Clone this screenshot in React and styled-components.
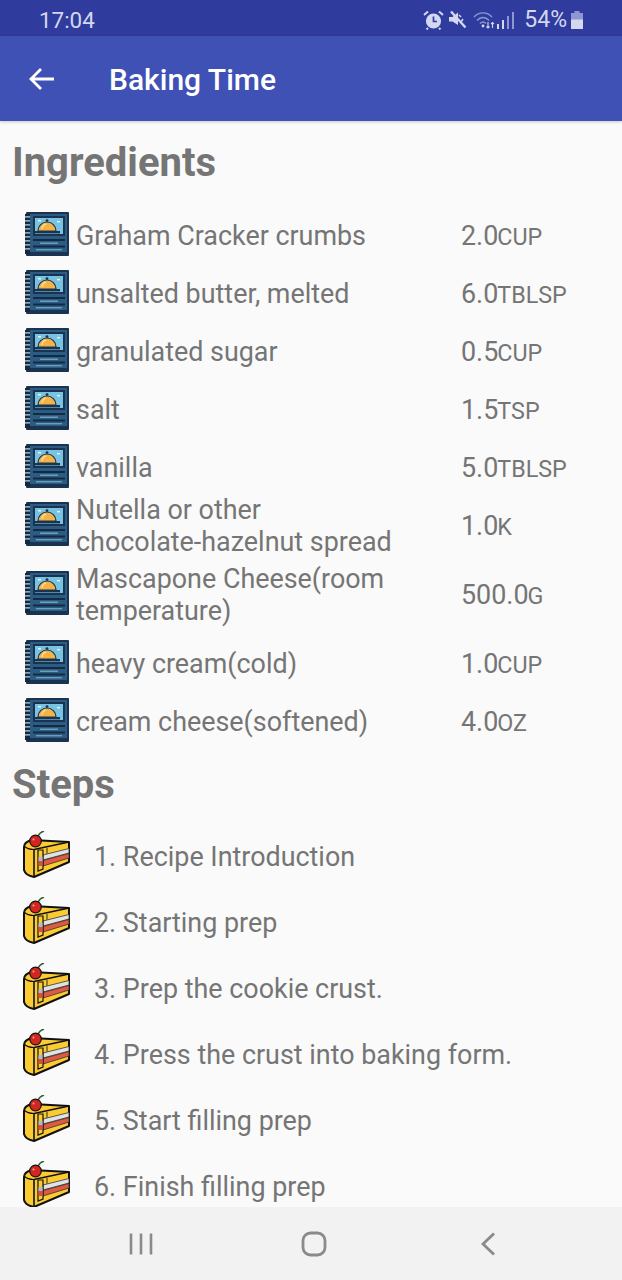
import React from "react";
import styled, { createGlobalStyle } from "styled-components";

const Global = createGlobalStyle`
  html, body { margin: 0; padding: 0; background: #fafafa; }
  * { box-sizing: border-box; }
  body { font-family: Roboto, "Noto Sans", sans-serif; }
`;

const ingredients = [
  { name: "Graham Cracker crumbs", qty: "2.0", unit: "CUP" },
  { name: "unsalted butter, melted", qty: "6.0", unit: "TBLSP" },
  { name: "granulated sugar", qty: "0.5", unit: "CUP" },
  { name: "salt", qty: "1.5", unit: "TSP" },
  { name: "vanilla", qty: "5.0", unit: "TBLSP" },
  { name: "Nutella or other chocolate-hazelnut spread", qty: "1.0", unit: "K" },
  { name: "Mascapone Cheese(room temperature)", qty: "500.0", unit: "G", tall: true },
  { name: "heavy cream(cold)", qty: "1.0", unit: "CUP" },
  { name: "cream cheese(softened)", qty: "4.0", unit: "OZ" },
];

const steps = [
  "1. Recipe Introduction",
  "2. Starting prep",
  "3. Prep the cookie crust.",
  "4. Press the crust into baking form.",
  "5. Start filling prep",
  "6. Finish filling prep",
];

function BookIcon() {
  return (
    <BookSvg width="46" height="46" viewBox="0 0 46 46">
      <rect x="2" y="1" width="43" height="44" rx="1" fill="#1a3350" />
      <rect x="6" y="3" width="37" height="38" fill="#2a5c84" />
      <rect x="1" y="3" width="5" height="40" fill="#16283e" />
      {[5, 9, 13, 17, 21, 25, 29, 33, 37].map(y => (
        <rect key={y} x="1" y={y} width="5" height="1.7" fill="#8fa5b8" />
      ))}
      <rect x="9" y="5" width="32" height="20" fill="#1a3350" />
      <rect x="11" y="7" width="28" height="16" fill="#79c3e2" />
      <path d="M14 20 a9 9 0 0 1 18 0 z" fill="#f4b445" stroke="#1a3350" strokeWidth="1.2" />
      <path d="M18 18 a6 6 0 0 1 4 -5" stroke="#fbe3a8" strokeWidth="1.2" fill="none" />
      <circle cx="23" cy="9.6" r="1.4" fill="#1a3350" />
      <rect x="11" y="20" width="25" height="2.4" fill="#1a3350" />
      <rect x="14" y="9" width="3" height="1.4" fill="#e3f4fb" />
      <rect x="33" y="10" width="3" height="1.4" fill="#e3f4fb" />
      <rect x="9" y="28" width="32" height="2" fill="#142a42" />
      <rect x="16" y="31.5" width="18" height="1.5" fill="#6f9dbc" />
      <rect x="9" y="34.5" width="32" height="2" fill="#142a42" />
      <rect x="12" y="38" width="26" height="1.4" fill="#6f9dbc" />
    </BookSvg>
  );
}

function CakeIcon() {
  return (
    <CakeSvg width="48" height="48" viewBox="0 0 48 48">
      <path
        d="M1 16 C1 12 5 10 9 9 L46 11 L46 31 L11 46 C6 45 2 43 1 39 Z"
        fill="#fbcb34"
        stroke="#111"
        strokeWidth="2"
        strokeLinejoin="round"
      />
      <path d="M11 18.5 L46 11" stroke="#111" strokeWidth="1.3" />
      <path d="M11 18.5 V46" stroke="#111" strokeWidth="1.6" />
      <path d="M1 15 C4 18 8 18.5 11 18.5" stroke="#111" strokeWidth="1.2" fill="none" />
      <path d="M20 24 L46 17.5 L46 22 L20 29 Z" fill="#dfe3e6" stroke="#333" strokeWidth="0.8" />
      <path d="M20 29.5 L46 22.5 L46 27 L20 35 Z" fill="#de5a43" stroke="#333" strokeWidth="0.8" />
      <path d="M15 19 H20 V38 L15 40 Z" fill="#fbcb34" stroke="#111" strokeWidth="1.2" />
      <rect x="15.5" y="26" width="4" height="4" fill="#b7b4cf" />
      <rect x="15.5" y="30" width="4" height="5" fill="#d9503c" />
      <path d="M24 17 V23" stroke="#7a6a20" strokeWidth="1.6" />
      <path d="M15 5 C16 3 18 1 21 0" stroke="#2f5f33" strokeWidth="1.6" fill="none" />
      <circle cx="12.5" cy="10" r="5.8" fill="#d3261f" stroke="#111" strokeWidth="1.2" />
      <circle cx="10.5" cy="8.5" r="1" fill="#f6a8a0" />
    </CakeSvg>
  );
}

export default function App() {
  return (
    <>
      <Global />
      <Screen>
        <StatusBar>
          <Clock>17:04</Clock>
          <StatusIcons>
            <svg width="21" height="20" viewBox="0 0 21 20">
              <circle cx="10.5" cy="11" r="7.6" fill="#d3d7f0" />
              <path d="M10.5 6.5 V11.5 H14" stroke="#2f3c9e" strokeWidth="1.7" fill="none" />
              <path d="M1 5 L5 1.5 M20 5 L16 1.5 M5 18 L3.5 19.5 M16 18 L17.5 19.5" stroke="#d3d7f0" strokeWidth="2" />
            </svg>
            <svg width="19" height="19" viewBox="0 0 19 19">
              <path d="M1 7 H4.5 L10 2.5 V15 L4.5 11.5 H1 Z" fill="#d3d7f0" />
              <path d="M11 5 L13 7 M13 12 L15 9" stroke="#d3d7f0" strokeWidth="1.5" />
              <path d="M3 1.5 L17.5 17.5" stroke="#d3d7f0" strokeWidth="2.4" />
            </svg>
            <WifiSignal>
              <svg width="22" height="20" viewBox="0 0 22 20">
                <path d="M1 7 C6 1.5 14 1.5 19 7 M4 10.5 C7.5 6.5 12.5 6.5 16 10.5 M7 13.5 C9 11.5 11 11.5 13 13.5" stroke="#8f97d2" strokeWidth="1.4" fill="none" />
                <circle cx="10" cy="16" r="1.4" fill="#d3d7f0" />
                <path d="M15 12 V18 M13.5 16.5 L15 18 L16.5 16.5 M19.5 18 V12.5 M18 14 L19.5 12.5 L21 14" stroke="#d3d7f0" strokeWidth="1.1" fill="none" />
              </svg>
              <svg width="20" height="20" viewBox="0 0 20 20">
                <rect x="1" y="14" width="2" height="5" fill="#d3d7f0" />
                <rect x="6" y="10" width="2" height="9" fill="#d3d7f0" />
                <rect x="11" y="6" width="2" height="13" fill="#8f97d2" />
                <rect x="16" y="2" width="2" height="17" fill="#8f97d2" />
              </svg>
            </WifiSignal>
            <Battery>54%</Battery>
            <svg width="12" height="18" viewBox="0 0 12 18">
              <rect x="3.5" y="0" width="5" height="2" fill="#8f97d2" />
              <rect x="0" y="2" width="12" height="16" fill="#8f97d2" />
              <rect x="0" y="8.5" width="12" height="9.5" fill="#d3d7f0" />
            </svg>
          </StatusIcons>
        </StatusBar>

        <Toolbar>
          <svg width="26" height="24" viewBox="0 0 26 24">
            <path d="M25 12 H2.5 M12 2 L2 12 L12 22" stroke="#fff" strokeWidth="2.8" fill="none" />
          </svg>
          <Title>Baking Time</Title>
        </Toolbar>

        <Content>
          <Heading>Ingredients</Heading>
          <IngredientList>
            {ingredients.map(item => (
              <IngredientRow key={item.name} $tall={item.tall}>
                <BookIcon />
                <IngredientName>{item.name}</IngredientName>
                <Quantity>
                  {item.qty}
                  <Unit>{item.unit}</Unit>
                </Quantity>
              </IngredientRow>
            ))}
          </IngredientList>

          <StepsHeading>Steps</StepsHeading>
          <StepList>
            {steps.map(step => (
              <StepRow key={step}>
                <CakeIcon />
                <StepText>{step}</StepText>
              </StepRow>
            ))}
          </StepList>
        </Content>

        <NavBar>
          <svg width="26" height="24" viewBox="0 0 26 24">
            <path d="M3 1.5 V22.5 M13 1.5 V22.5 M23 1.5 V22.5" stroke="#8a8a8a" strokeWidth="2.6" />
          </svg>
          <svg width="26" height="26" viewBox="0 0 26 26">
            <rect x="2" y="2" width="22" height="22" rx="7.5" stroke="#8a8a8a" strokeWidth="2.8" fill="none" />
          </svg>
          <svg width="16" height="24" viewBox="0 0 16 24">
            <path d="M14 1.5 L3 12 L14 22.5" stroke="#8a8a8a" strokeWidth="2.8" fill="none" />
          </svg>
        </NavBar>
      </Screen>
    </>
  );
}

const Screen = styled.div`
  width: 622px;
  height: 1280px;
  display: flex;
  flex-direction: column;
  overflow: hidden;
  background: #fafafa;
`;

const StatusBar = styled.div`
  height: 36px;
  flex: none;
  background: #2f3c9e;
  color: #d3d7f0;
  display: flex;
  align-items: center;
  justify-content: space-between;
  padding: 3px 39px 0 39px;
`;

const Clock = styled.span`
  font-size: 22.4px;
`;

const StatusIcons = styled.div`
  display: flex;
  align-items: center;
  gap: 4px;
`;

const WifiSignal = styled.div`
  display: flex;
  align-items: center;
  margin-left: 2px;
  gap: 1px;
`;

const Battery = styled.span`
  font-size: 23px;
  margin-left: 4px;
`;

const Toolbar = styled.header`
  height: 85px;
  flex: none;
  background: #3f51b5;
  display: flex;
  align-items: center;
  padding: 0 0 0 29px;
  box-shadow: 0 1px 3px rgba(0, 0, 0, 0.2);
  position: relative;
`;

const Title = styled.h1`
  margin: 0 0 0 54px;
  padding-top: 1px;
  color: #fff;
  font-size: 30px;
  font-weight: 500;
`;

const Content = styled.main`
  flex: 1;
  min-height: 0;
  overflow: hidden;
`;

const Heading = styled.h2`
  margin: 0;
  padding: 20px 0 0 12px;
  height: 86px;
  font-size: 40px;
  line-height: 44px;
  font-weight: 700;
  color: #757575;
`;

const StepsHeading = styled(Heading)`
  height: 73px;
  padding-top: 12px;
`;

const IngredientList = styled.div`
  display: flex;
  flex-direction: column;
  padding: 0 0 0 24px;
`;

const IngredientRow = styled.div`
  height: ${p => (p.$tall ? "80px" : "58px")};
  display: flex;
  align-items: center;
  gap: 6px;
  color: #757575;
`;

const BookSvg = styled.svg`
  flex: none;
  margin-bottom: 4px;
`;

const CakeSvg = styled.svg`
  flex: none;
  margin-bottom: 4px;
`;

const IngredientName = styled.div`
  width: 384px;
  flex: none;
  margin-right: -5px;
  padding-right: 68px;
  font-size: 26.9px;
  line-height: 32px;
`;

const Quantity = styled.div`
  font-size: 26.9px;
`;

const Unit = styled.span`
  font-size: 23.3px;
  margin-left: -1px;
`;

const StepList = styled.div`
  display: flex;
  flex-direction: column;
  padding-left: 23px;
`;

const StepRow = styled.div`
  height: 66px;
  display: flex;
  align-items: center;
  gap: 23px;
`;

const StepText = styled.div`
  font-size: 26.9px;
  color: #757575;
`;

const NavBar = styled.nav`
  height: 73px;
  flex: none;
  background: #f2f2f2;
  display: grid;
  grid-template-columns: 173px 179px 1fr;
  align-items: center;
  justify-items: start;
  padding: 0 0 0 128px;
`;
